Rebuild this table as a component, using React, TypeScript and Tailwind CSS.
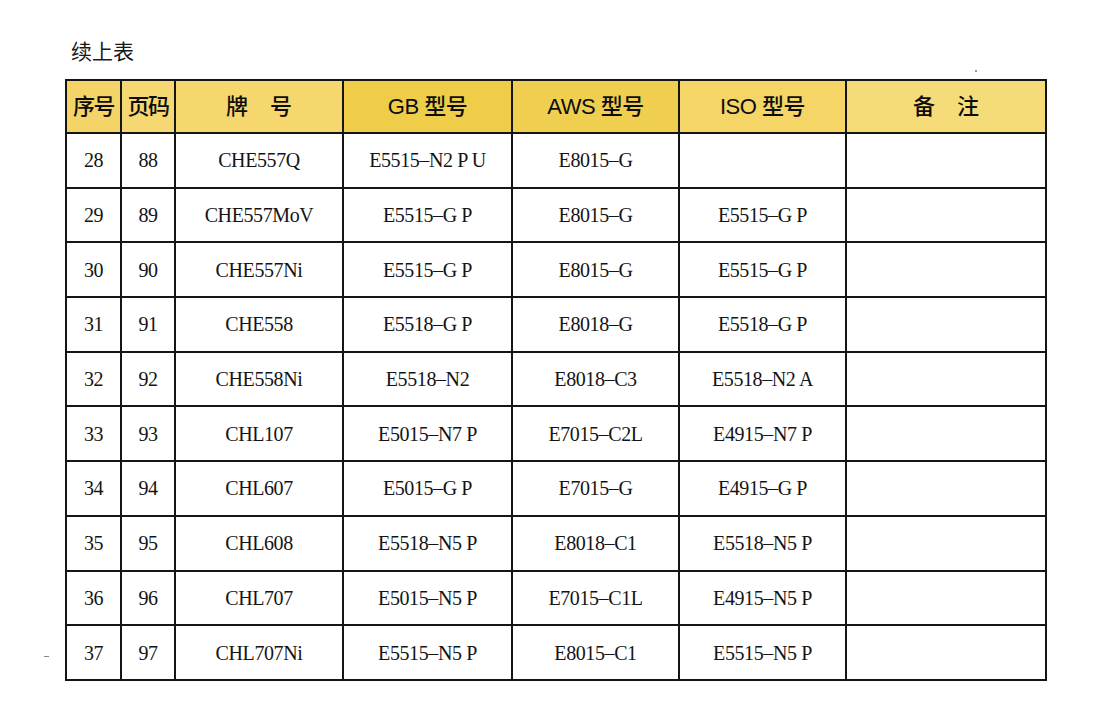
import React from "react";

const rows: [string, string, string, string, string, string][] = [
  ["28", "88", "CHE557Q", "E5515–N2 P U", "E8015–G", ""],
  ["29", "89", "CHE557MoV", "E5515–G P", "E8015–G", "E5515–G P"],
  ["30", "90", "CHE557Ni", "E5515–G P", "E8015–G", "E5515–G P"],
  ["31", "91", "CHE558", "E5518–G P", "E8018–G", "E5518–G P"],
  ["32", "92", "CHE558Ni", "E5518–N2", "E8018–C3", "E5518–N2 A"],
  ["33", "93", "CHL107", "E5015–N7 P", "E7015–C2L", "E4915–N7 P"],
  ["34", "94", "CHL607", "E5015–G P", "E7015–G", "E4915–G P"],
  ["35", "95", "CHL608", "E5518–N5 P", "E8018–C1", "E5518–N5 P"],
  ["36", "96", "CHL707", "E5015–N5 P", "E7015–C1L", "E4915–N5 P"],
  ["37", "97", "CHL707Ni", "E5515–N5 P", "E8015–C1", "E5515–N5 P"],
];

const sans = "font-['Liberation_Sans','Noto_Sans_CJK_SC',sans-serif]";
const serif = "font-['Liberation_Serif','Noto_Sans_CJK_SC',serif]";

export default function App() {
  return (
    <div className="w-[1108px] h-[712px] bg-white relative overflow-hidden">
      <div className="pl-[65px] pt-[38px]">
        <div className={`${sans} text-[21px] leading-[28px] text-[#1a1a1a] pl-[6px] h-[41px]`}>续上表</div>
        <table className="border-collapse table-fixed w-[980px] border-2 border-[#151515]">
          <colgroup>
            <col className="w-[55px]" />
            <col className="w-[54px]" />
            <col className="w-[168px]" />
            <col className="w-[169px]" />
            <col className="w-[167px]" />
            <col className="w-[167px]" />
            <col className="w-[200px]" />
          </colgroup>
          <thead>
            <tr className={`h-[53px] ${sans} text-[22px] text-[#0d0d0d]`}>
              <th className="border-2 border-[#151515] bg-[#f4d466] font-medium p-0 tracking-[-1.5px]">序号</th>
              <th className="border-2 border-[#151515] bg-[#f5d872] font-medium p-0 tracking-[-1.5px]">页码</th>
              <th className="border-2 border-[#151515] bg-[#f5d76d] font-medium p-0">
                <span className="tracking-[22px] mr-[-22px]">牌号</span>
              </th>
              <th className="border-2 border-[#151515] bg-[#efcd48] font-medium p-0 tracking-[-0.5px]">GB 型号</th>
              <th className="border-2 border-[#151515] bg-[#f0cf50] font-medium p-0 tracking-[-0.5px]">AWS 型号</th>
              <th className="border-2 border-[#151515] bg-[#f4d565] font-medium p-0 tracking-[-0.5px]">ISO 型号</th>
              <th className="border-2 border-[#151515] bg-[#f6dc79] font-medium p-0">
                <span className="tracking-[22px] mr-[-22px]">备注</span>
              </th>
            </tr>
          </thead>
          <tbody>
            {rows.map((r) => (
              <tr key={r[0]} className={`h-[54.7px] ${serif} text-[20px] text-[#141414] tracking-[-0.4px]`}>
                {r.map((c, i) => (
                  <td key={i} className="border-2 border-[#151515] text-center p-0">{c}</td>
                ))}
                <td className="border-2 border-[#151515] p-0"></td>
              </tr>
            ))}
          </tbody>
        </table>
      </div>
      <div className="absolute left-[44px] top-[656px] w-[5px] h-[1px] bg-[#888]" />
      <div className="absolute left-[975px] top-[70px] w-[2px] h-[2px] bg-[#999]" />
    </div>
  );
}
